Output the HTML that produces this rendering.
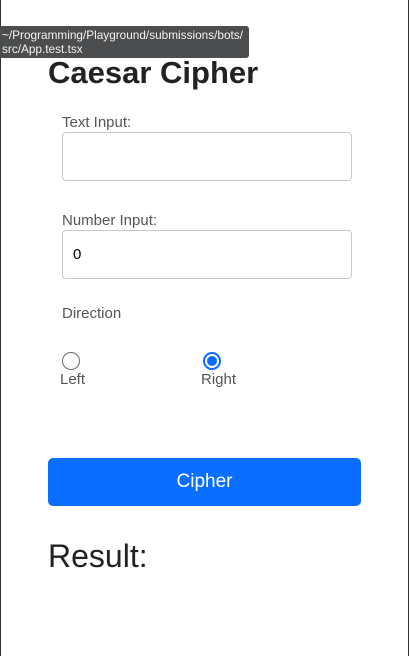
<!DOCTYPE html>
<html><head><style>
*{margin:0;padding:0;box-sizing:border-box}
body{width:410px;height:656px;background:#fff;font-family:"Liberation Sans",Arial,sans-serif;position:relative;overflow:hidden}
.bl{position:absolute;left:0;top:0;width:1px;height:656px;background:#333}
.br{position:absolute;left:408px;top:0;width:1px;height:656px;background:#333}
.tip{position:absolute;left:0;top:26px;width:249px;height:32px;background:#4b4d4f;color:#f2f2f2;font-size:11.8px;line-height:14px;padding:2px 0 0 2px;border-radius:0 3px 3px 0;white-space:nowrap}
h1{position:absolute;left:48px;top:55px;font-size:31px;font-weight:bold;color:#222}
.lbl{position:absolute;left:62px;font-size:15px;color:#555}
.inp{position:absolute;left:62px;width:290px;height:49px;border:1px solid #c8c8c8;border-radius:4px;font-size:15px;color:#000;padding:15px 0 0 10px}
.radio{position:absolute;width:18px;height:18px;border-radius:50%;border:1.5px solid #6b6b6b;background:#fff}
.radio.on{border:2px solid #0a6cff}
.radio.on::after{content:"";position:absolute;left:2px;top:2px;width:10px;height:10px;border-radius:50%;background:#0a6cff}
.rl{position:absolute;font-size:15px;color:#555}
.btn{position:absolute;left:48px;top:458px;width:313px;height:48px;background:#0a6fff;border-radius:5px;color:#fff;font-size:19px;text-align:center;line-height:48px}
.res{position:absolute;left:48px;top:538px;font-size:32px;color:#222}
</style></head><body>
<div class="bl"></div><div class="br"></div>
<h1>Caesar Cipher</h1>
<div class="tip">~/Programming/Playground/submissions/bots/<br>src/App.test.tsx</div>
<div class="lbl" style="top:114px">Text Input:</div>
<div class="inp" style="top:132px"></div>
<div class="lbl" style="top:212px">Number Input:</div>
<div class="inp" style="top:230px">0</div>
<div class="lbl" style="top:305px">Direction</div>
<div class="radio" style="left:62px;top:352px"></div>
<div class="radio on" style="left:203px;top:352px"></div>
<div class="rl" style="left:60px;top:371px">Left</div>
<div class="rl" style="left:201px;top:371px">Right</div>
<div class="btn">Cipher</div>
<div class="res">Result:</div>
</body></html>
